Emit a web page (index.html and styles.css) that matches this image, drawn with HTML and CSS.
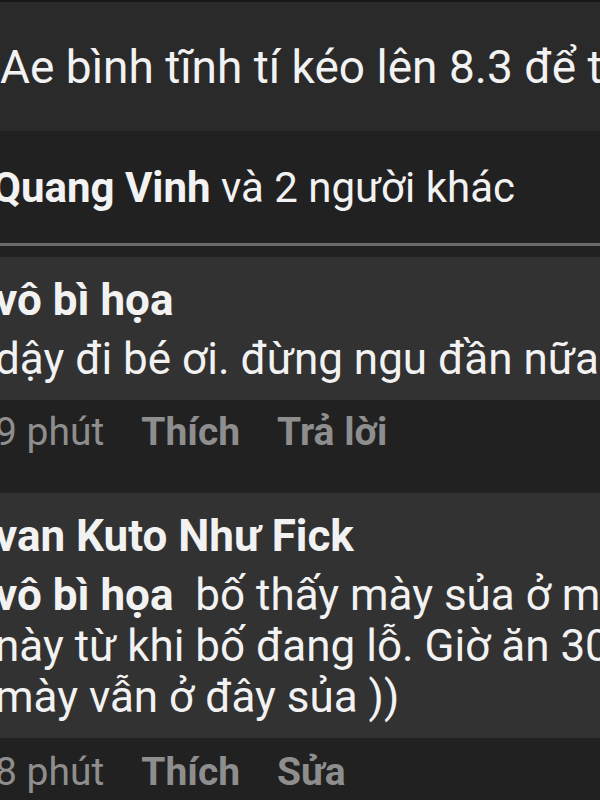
FILE: index.html
```html
<!DOCTYPE html>
<html lang="vi">
<head>
    <meta charset="UTF-8">
    <meta name="viewport" content="width=device-width, initial-scale=1.0">
    <title>Bình luận</title>
    <link rel="stylesheet" href="styles.css">
</head>
<body>
    <div class="feed">
        <!-- 본문 글 -->
        <div class="post-text">Ae bình tĩnh tí kéo lên 8.3 để tính tiếp</div>

        <!-- 좋아요 -->
        <div class="reactions"><b>Quang Vinh</b> và 2 người khác</div>
        <div class="divider"></div>

        <!-- 댓글 1 -->
        <div class="comment">
            <div class="bubble">
                <div class="name">vô bì họa</div>
                <div class="body">dậy đi bé ơi. đừng ngu đần nữa</div>
            </div>
            <div class="meta">
                <span>9 phút</span>
                <b>Thích</b>
                <b>Trả lời</b>
            </div>
        </div>

        <!-- 댓글 2 -->
        <div class="comment">
            <div class="bubble">
                <div class="name">van Kuto Như Fick</div>
                <div class="body"><b>vô bì họa</b>&nbsp; bố thấy mày sủa ở mấy chỗ<br>này từ khi bố đang lỗ. Giờ ăn 30%<br>mày vẫn ở đây sủa ))</div>
            </div>
            <div class="meta">
                <span>8 phút</span>
                <b>Thích</b>
                <b>Sửa</b>
            </div>
        </div>
    </div>
</body>
</html>
```

FILE: styles.css
```css
html,body{
    margin: 0;
    padding: 0;
}
body{
    background: #212121;
    color: #f2f2f2;
    font-family: Roboto, "Noto Sans", sans-serif;
    overflow: hidden;
}
.feed{
    width: 600px;
    height: 800px;
    overflow: hidden;
    white-space: nowrap;
}

/* 본문 글 */
.post-text{
    border-top: 2px solid #161616;
    background: #2a2a2a;
    font-size: 46px;
    line-height: 54px;
    padding: 38px 0 37px 0;
}

/* 좋아요 */
.reactions{
    font-size: 42px;
    line-height: 48px;
    padding: 33px 0 31px 0;
    margin-left: -8px;
}
.reactions b{
    font-weight: 700;
}
.divider{
    height: 3px;
    background: #6b6b6b;
    margin-bottom: 11px;
}

/* 댓글 */
.comment{
    margin-left: -5px;
}
.bubble{
    background: #323232;
    padding: 17px 0 15px 0;
    font-size: 44px;
}
.name{
    font-weight: 700;
    line-height: 52px;
    margin-bottom: 8px;
}
.body{
    line-height: 51px;
}
.body b{
    font-weight: 700;
}
.comment:first-of-type .bubble{
    padding-bottom: 24px;
}
.comment:first-of-type .name{
    margin-bottom: -1px;
}

/* 시간, 좋아요, 답글 */
.meta{
    display: flex;
    gap: 37px;
    color: #8e8e8e;
    font-size: 39px;
    line-height: 46px;
    padding: 9px 0 38px 0;
}
.meta b{
    font-weight: 700;
}
.comment + .comment .meta{
    padding-top: 11px;
}
```
